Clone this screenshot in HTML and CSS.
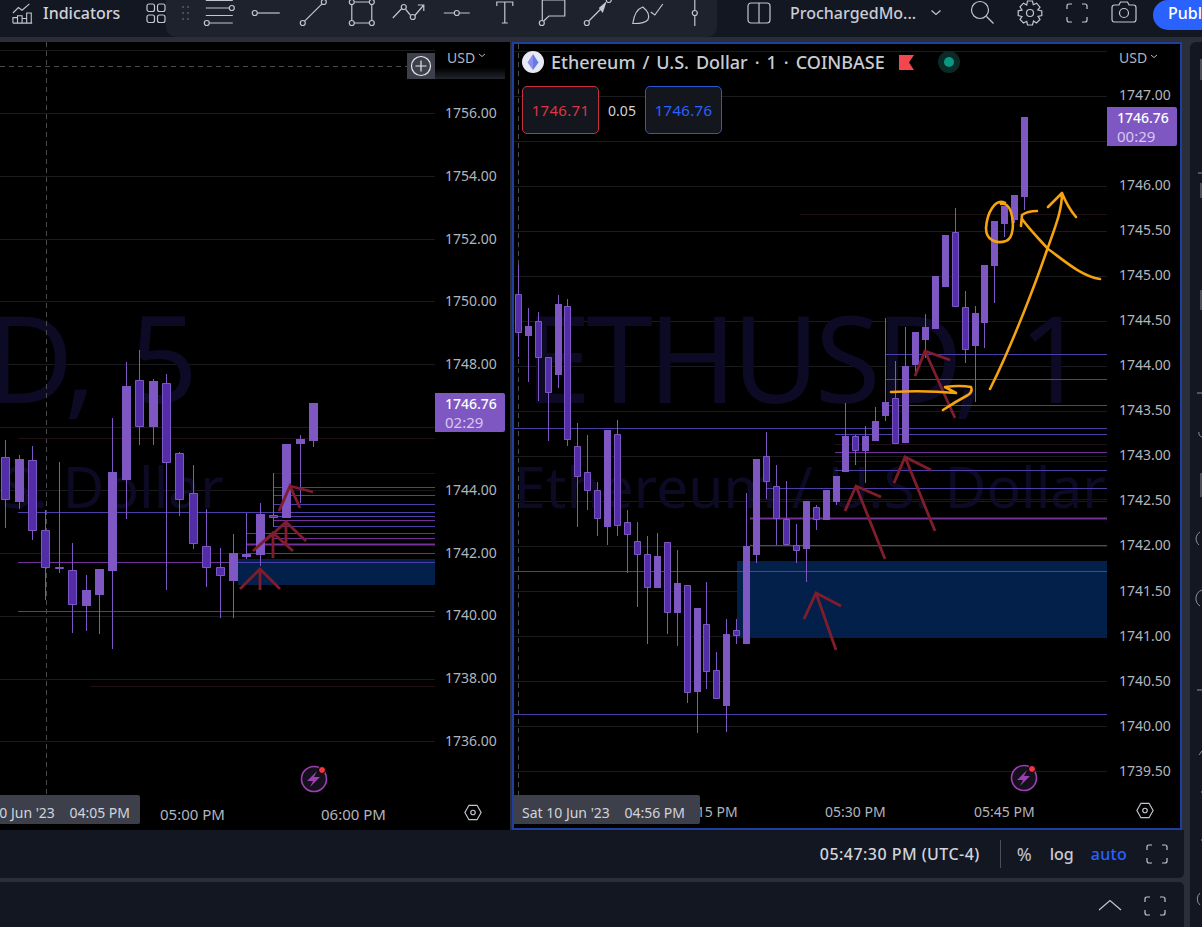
FILE: index.html
```html
<!DOCTYPE html>
<html lang="en">
<head>
<meta charset="utf-8">
<title>ETHUSD chart layout</title>
<link rel="stylesheet" href="styles.css">
</head>
<body>
<div class="app">
  <header class="topbar">
    <div class="top-left">
      <svg class="ico ind" viewBox="0 0 24 24"><path d="M1 12l6-6 4 3 8-7M1 23v-6h5v6M1 23h21M6 23v-8h5v8M11 23v-5h5v5M16 23v-11h5v11"/></svg>
      <span class="ind-label">Indicators</span>
      <svg class="ico layouts" viewBox="0 0 20 22"><rect x="1" y="2" width="7.5" height="7.5" rx="2"/><rect x="11.5" y="2" width="7.5" height="7.5" rx="2"/><rect x="1" y="13" width="7.5" height="7.5" rx="2"/><rect x="11.5" y="13" width="7.5" height="7.5" rx="2"/></svg>
    </div>
    <nav class="toolbar">
      <svg class="grip" viewBox="0 0 20 37"><path d="M7 6h2v2H7zM12 6h2v2h-2zM7 12h2v2H7zM12 12h2v2h-2zM7 18h2v2H7zM12 18h2v2h-2z"/></svg>
      <svg class="tool" viewBox="-23.8 0 47.6 37"><path d="M-13 0.5H14M-13 8H10.500M-13 15.500H14M-9.500 23H14"/><circle cx="13" cy="8" r="2.500"/><circle cx="-12" cy="23" r="2.500"/></svg>
      <svg class="tool" viewBox="-23.8 0 47.6 37"><circle cx="-12" cy="13" r="2.500"/><path d="M-9.500 13H13"/></svg>
      <svg class="tool" viewBox="-23.8 0 47.6 37"><circle cx="-11" cy="23" r="2.500"/><circle cx="10" cy="2" r="2.500"/><path d="M-9.200 21.200L8.200 3.800"/></svg>
      <svg class="tool" viewBox="-23.8 0 47.6 37"><circle cx="-10" cy="2" r="2.500"/><circle cx="10" cy="2" r="2.500"/><circle cx="-10" cy="23" r="2.500"/><circle cx="10" cy="23" r="2.500"/><path d="M-7.500 2H7.500M-7.500 23H7.500M-10 4.500V20.500M10 4.500V20.500"/></svg>
      <svg class="tool" viewBox="-23.8 0 47.6 37"><path d="M-16 18L-7 8.500M-3 9.500L1.500 15M6 15.500L15 5M9 5H15V11"/><circle cx="-5" cy="7" r="2.500"/><circle cx="4" cy="17" r="2.500"/></svg>
      <svg class="tool" viewBox="-23.8 0 47.6 37"><path d="M-13 13H-2.500M2.500 13H13"/><circle cy="13" r="2.500"/></svg>
      <svg class="tool" viewBox="-23.8 0 47.6 37"><path d="M-8 6V2H8V6M0 2V23M-3 23H3"/></svg>
      <svg class="tool" viewBox="-23.8 0 47.6 37"><path d="M-9.500 20.500V0H13V16H-3L-8 21"/><circle cx="-10" cy="23" r="2.500"/></svg>
      <svg class="tool" viewBox="-23.8 0 47.6 37"><circle cx="-13" cy="23" r="2.500"/><path d="M-11 21L2 8"/><path class="solid" d="M7 1L3 13L-1 8z"/><circle cx="9" cy="0" r="2.500"/></svg>
      <svg class="tool" viewBox="-23.800 0 47.600 37"><path d="M-14 23.500C-13 16 -10 9 -4 7C1 11 3 16 1 20C-3 24 -9 23.500 -14 23.500zM4 12L8 15L16 4"/></svg>
      <svg class="tool" viewBox="-23.800 0 47.600 37"><path d="M0 0V10.500M0 15.500V26"/><circle cy="13" r="2.500"/></svg>
    </nav>
    <div class="top-right">
      <svg class="ico t-layout" viewBox="0 0 24 22"><rect x="1" y="1" width="22" height="20" rx="3"/><path d="M12 1V21"/></svg>
      <span class="layout-name">ProchargedMo...</span>
      <svg class="ico t-chev" viewBox="0 0 12 8"><path d="M1.500 1.500L6 5.500L10.500 1.500"/></svg>
      <i class="t-sep"></i>
      <svg class="ico t-search" viewBox="0 0 24 24"><circle cx="10" cy="10" r="8.500"/><path d="M16.500 16.500L23.500 23.500"/></svg>
      <svg class="ico t-gear" viewBox="0 0 26 26"><circle cx="13" cy="13" r="3.500"/><path d="M10.500 1H15.500L16.300 4.700L19.600 3.200L23 7.200L20.800 10L24.800 11V15.500L21 16.300L23 19.500L19.500 23L16.500 21L15.500 25H10.500L9.700 21.300L6.500 23L3 19.500L5 16.500L1.200 15.500V10.800L5 10L3 6.800L6.500 3.200L9.700 5z"/></svg>
      <svg class="ico t-full" viewBox="0 0 22 20"><path d="M1 6V3Q1 1 3 1H6M16 1H19Q21 1 21 3V6M21 14V17Q21 19 19 19H16M6 19H3Q1 19 1 17V14"/></svg>
      <svg class="ico t-cam" viewBox="0 0 26 22"><path d="M3.500 4H8L9.500 1H16.500L18 4H22.500Q25 4 25 6.500V18.500Q25 21 22.500 21H3.500Q1 21 1 18.500V6.500Q1 4 3.500 4z"/><circle cx="13" cy="12" r="4.500"/></svg>
      <span class="publish">Publish</span>
    </div>
  </header>

  <div class="workspace">
    <main class="main">
      <div class="panes">
        <section class="pane pane-left">
          <svg class="plot" viewBox="0 42 435 755">
            <g class="grid"><path d="M0 50.500H435M0 113.500H435M0 176.500H435M0 239.500H435M0 301.500H435M0 364.500H435M0 427.500H435M0 490.500H435M0 553.500H435M0 616.500H435M0 679.500H435M0 741.500H435"/></g>
            <text class="wm wm-a" x="-86" y="403">ETHUSD, 5</text>
            <text class="wm wm-b" x="-72" y="508">Ethereum / U.S. Dollar</text>
            <path class="cross" d="M46.500 42V797M0 66.500H408"/>
            <rect class="zone" x="238" y="559" width="197" height="26"/>
            <path class="ln-red" d="M18 438.500H435M273 473.500H435M90 686.500H435"/>
            <path class="ln-blue" d="M18 512.500H435M18 611.500H435M273 487.500H435M273 504.500H435M273 516.500H435M273 526.500H435M246 533.500H435M273 553.500H435M246 553.500H273"/>
            <path class="ln-mag" d="M18 562.500H238M273 495.500H435M273 520.500H435M273 538.500H435"/>
            <path class="ln-mag thick" d="M246 544.500H435"/>
            <path class="ln-blue" d="M238 562.500H435"/>
            <path class="wick" d="M5.500 440V528M19.500 455V509M32.500 446V540M45.500 510V600M59.500 462V573M72.500 543V633M86.500 575V631M99.500 569V634M112.500 418V649M126.500 362V519M139.500 350V445M153.500 379V445M166.500 374V590M179.500 452V516M193.500 465V549M206.500 509V587M220.500 548V618M233.500 534V618M246.500 513V559M260.500 503V566M273.500 473V527M300.500 435V503M313.500 403V447"/>
            <path class="up" d="M15 459h9v43h-9zM82 590h9v16h-9zM95 569h9v26h-9zM108 472h9v99h-9zM122 386h9v94h-9zM149 381h9v46h-9zM229 553h9v28h-9zM242 554h9v3h-9zM256 514h9v41h-9zM282 444h9v74h-9zM296 439h9v5h-9zM309 403h9v38h-9z"/>
            <path class="down" d="M1.500 457.500h8v42h-8zM28.500 460.500h8v70h-8zM41.500 530.500h8v37h-8zM55.500 567.500h8v1h-8zM68.500 570.500h8v34h-8zM135.500 380.500h8v46h-8zM162.500 383.500h8v79h-8zM175.500 453.500h8v46h-8zM189.500 493.500h8v50h-8zM202.500 546.500h8v21h-8zM216.500 567.500h8v8h-8zM269.500 515.500h8v2h-8z"/>
            <path class="arrow" d="M240 589L260 569L280 589M260 569V590M253 551L273 533L293 551M273 533V558M265 541L286 522L306 541M286 522V545M279 511L290 486L300 508M290 486L313 492"/>
            <g class="bolt" transform="translate(314 779)"><circle r="12.500"/><path d="M3 -8L-7 2H-1L-4 8L6 -2H0z"/><circle class="dot" cx="8" cy="-9" r="3.500"/></g>
          </svg>
          <div class="price-axis axis-left">
            <span>1756.00</span><span>1754.00</span><span>1752.00</span><span>1750.00</span><span>1748.00</span><span class="under">1746.00</span><span>1744.00</span><span>1742.00</span><span>1740.00</span><span>1738.00</span><span>1736.00</span>
            <div class="usd usd-left">USD<svg viewBox="0 0 8 5"><path d="M1 1L4 3.500L7 1"/></svg></div>
            <div class="tag tag-left"><b>1746.76</b><em>02:29</em></div>
          </div>
          <div class="time-axis">
            <span class="date-tag date-left"><span class="date-text">0 Jun '23 &nbsp;&nbsp;&nbsp;04:05 PM</span></span>
            <span class="t t1">05:00 PM</span>
            <span class="t t2">06:00 PM</span>
          </div>
          <div class="corner"><svg class="hex" viewBox="0 0 20 18"><path d="M5.500 1H14.500L19 9L14.500 17H5.500L1 9z"/><circle cx="10" cy="9" r="2.500"/></svg></div>
          <div class="plus-box"><svg viewBox="0 0 22 22"><circle cx="11" cy="11" r="9.500"/><path d="M11 5.500V16.500M5.500 11H16.500"/></svg></div>
        </section>
        <i class="pane-sep"></i>
        <section class="pane pane-right">
          <svg class="plot" viewBox="514 44 593 751">
            <g class="grid"><path d="M514 51.500H1107M514 96.500H1107M514 141.500H1107M514 186.500H1107M514 231.500H1107M514 276.500H1107M514 321.500H1107M514 366.500H1107M514 411.500H1107M514 456.500H1107M514 501.500H1107M514 546.500H1107M514 591.500H1107M514 636.500H1107M514 681.500H1107M514 726.500H1107M514 771.500H1107"/></g>
            <text class="wm wm-a" x="803.500" y="403">ETHUSD, 1</text>
            <text class="wm wm-b" x="810" y="508">Ethereum / U.S. Dollar</text>
            <path class="cross" d="M518.500 44V795"/>
            <rect class="zone" x="737" y="561" width="370" height="77"/>
            <path class="ln-red" d="M800 214.500H1107M835 444.500H1107M835 461.500H1107M750 499.500H1107"/>
            <path class="ln-blue" d="M514 428.500H1107M514 714.500H1107M885 354.500H1107M885 405.500H1107M835 434.500H1107M835 470.500H1107M766 488.500H1107M750 545.500H1107M737 571.500H1107"/>
            <path class="ln-mag" d="M514 571.500H737M885 379.500H1107M835 452.500H1107"/>
            <path class="ln-mag thick" d="M750 518.500H1107"/>
            <path class="wick" d="M518.500 265V357M528.500 308V382M538.500 312V401M548.500 357V441M558.500 295V388M567.500 299V446M577.500 423V527M587.500 435V510M597.500 482V536M607.500 430V545M617.500 420V536M627.500 510V573M637.500 522V607M647.500 536V644M657.500 533V588M667.500 542V634M677.500 550V646M687.500 585V703M697.500 608V733M706.500 582V689M716.500 652V699M726.500 619V732M736.500 619V644M746.500 493V644M756.500 459V563M766.500 432V499M776.500 465V545M786.500 481V545M796.500 524V563M806.500 501V582M816.500 505V530M826.500 490V520M836.500 476V505M845.500 403V472M855.500 435V465M865.500 426V483M875.500 407V441M885.500 318V421M895.500 361V444M905.500 327V443M915.500 332V376M925.500 314V358M955.500 208V307M965.500 291V363M975.500 306V402M984.500 265V348M994.500 221V303M1004.500 206V237M1014.500 195V223M1024.500 117V210"/>
            <path class="up" d="M525 326h7v10h-7zM555 304h7v71h-7zM604 430h7v97h-7zM654 556h7v32h-7zM674 583h7v30h-7zM694 608h7v84h-7zM723 634h7v72h-7zM743 546h7v98h-7zM753 459h7v96h-7zM803 501h7v48h-7zM823 490h7v30h-7zM833 476h7v26h-7zM842 436h7v36h-7zM862 436h7v15h-7zM872 421h7v20h-7zM882 402h7v14h-7zM902 366h7v77h-7zM912 332h7v33h-7zM922 327h7v13h-7zM932 276h7v53h-7zM942 235h7v52h-7zM972 313h7v33h-7zM981 265h7v58h-7zM991 221h7v45h-7zM1001 206h7v18h-7zM1011 195h7v25h-7zM1021 117h7v80h-7z"/>
            <path class="down" d="M515.500 294.500h6v38h-6zM535.500 321.500h6v36h-6zM545.500 357.500h6v35h-6zM564.500 306.500h6v133h-6zM574.500 446.500h6v30h-6zM584.500 472.500h6v18h-6zM594.500 490.500h6v28h-6zM614.500 434.500h6v91h-6zM624.500 522.500h6v12h-6zM634.500 541.500h6v13h-6zM644.500 554.500h6v33h-6zM664.500 542.500h6v70h-6zM684.500 585.500h6v107h-6zM703.500 624.500h6v47h-6zM713.500 670.500h6v28h-6zM733.500 630.500h6v5h-6zM763.500 456.500h6v25h-6zM773.500 486.500h6v32h-6zM783.500 519.500h6v25h-6zM793.500 545.500h6v5h-6zM813.500 507.500h6v12h-6zM852.500 436.500h6v14h-6zM892.500 398.500h6v45h-6zM952.500 232.500h6v74h-6zM962.500 307.500h6v42h-6z"/>
            <path class="arrow" d="M804 619L816 593L841 606M816 593L836 650M845 511L856 486L881 497M856 486L885 559M894 483L905 457L931 470M905 457L935 531M915 376L925 351L950 360M925 351L955 418"/>
            <path class="pen" d="M891 392Q925 390 956 393L945 387Q960 385 971 387Q973 392 968 395Q955 402 943 410M990 389C1012 345 1035 285 1047 250C1056 225 1062 210 1062 193M1048 207L1062 193C1066 203 1070 210 1076 217M1100 279C1080 276 1060 257 1048 249C1040 240 1030 230 1022 219M1021 226L1022 215C1026 212 1032 211 1037 211M1005 203C995 198 987 213 986 228C986 241 997 244 1006 241C1014 238 1014 222 1011 212C1009 206 1005 203 1001 204"/>
            <g class="bolt" transform="translate(1024 778)"><circle r="12.500"/><path d="M3 -8L-7 2H-1L-4 8L6 -2H0z"/><circle class="dot" cx="8" cy="-9" r="3.500"/></g>
          </svg>
          <div class="price-axis axis-right">
            <span>1747.00</span><span class="under">1746.50</span><span>1746.00</span><span>1745.50</span><span>1745.00</span><span>1744.50</span><span>1744.00</span><span>1743.50</span><span>1743.00</span><span>1742.50</span><span>1742.00</span><span>1741.50</span><span>1741.00</span><span>1740.50</span><span>1740.00</span><span>1739.50</span>
            <div class="usd usd-right">USD<svg viewBox="0 0 8 5"><path d="M1 1L4 3.500L7 1"/></svg></div>
            <div class="tag tag-right"><b>1746.76</b><em>00:29</em></div>
          </div>
          <div class="time-axis">
            <span class="date-tag date-right"><span class="date-text">Sat 10 Jun '23 &nbsp;&nbsp;&nbsp;04:56 PM</span></span>
            <span class="t t3">05:15 PM</span>
            <span class="t t4">05:30 PM</span>
            <span class="t t5">05:45 PM</span>
          </div>
          <div class="corner"><svg class="hex" viewBox="0 0 20 18"><path d="M5.500 1H14.500L19 9L14.500 17H5.500L1 9z"/><circle cx="10" cy="9" r="2.500"/></svg></div>
          <div class="legend">
            <div class="legend-title">
              <svg class="coin" viewBox="0 0 22 22"><circle cx="11" cy="11" r="11"/><path class="c1" d="M11 3L5.500 11.500L11 19z"/><path class="c2" d="M11 3L16.500 11.500L11 19z"/></svg>
              <span class="sym">Ethereum / U.S. Dollar · 1 · COINBASE</span>
              <svg class="flag" viewBox="0 0 15 15"><path d="M0 0H15L10 7.500L15 15H0z"/></svg>
              <svg class="status" viewBox="0 0 22 22"><circle class="halo" cx="11" cy="11" r="11"/><circle class="core" cx="11" cy="11" r="5"/></svg>
            </div>
            <div class="quotes">
              <span class="quote sell">1746.71</span>
              <span class="spread">0.05</span>
              <span class="quote buy">1746.76</span>
            </div>
          </div>
        </section>
      </div>
      <footer class="status-bar">
        <span class="clock">05:47:30 PM (UTC-4)</span>
        <i class="st-sep"></i>
        <span class="st-btn pct">%</span>
        <span class="st-btn log">log</span>
        <span class="st-btn auto">auto</span>
        <svg class="ico st-full" viewBox="0 0 22 20"><path d="M1 6V3Q1 1 3 1H6M16 1H19Q21 1 21 3V6M21 14V17Q21 19 19 19H16M6 19H3Q1 19 1 17V14"/></svg>
      </footer>
      <div class="bottom-panel">
        <svg class="ico bp-up" viewBox="0 0 24 12"><path d="M1 11L12 1.500L23 11"/></svg>
        <svg class="ico bp-full" viewBox="0 0 22 20"><path d="M1 6V3Q1 1 3 1H6M16 1H19Q21 1 21 3V6M21 14V17Q21 19 19 19H16M6 19H3Q1 19 1 17V14"/></svg>
      </div>
    </main>
    <aside class="sidebar">
      <svg viewBox="1190 42 12 885"><path class="side-fill" d="M1200 59h2v21h-2zM1200 183h2v15h-2zM1200 290h2v20h-2zM1200 473h2v24h-2z"/><path class="side-line" d="M1198 173H1202M1197 393H1202M1197 690H1202M1199 432A4 4 0 0 0 1202 437M1200 532A8 8 0 0 0 1199 545M1202 590A9 9 0 0 0 1200 606M1199 755L1202 751M1201 792H1202M1201 840H1202M1200 893A8 8 0 0 0 1200 905"/></svg>
    </aside>
  </div>
</div>
</body>
</html>
```
FILE: styles.css
```css
* { box-sizing: border-box; }
html, body { margin: 0; padding: 0; background: #2a2e39; }
body { font-family: "Noto Sans", "Liberation Sans", sans-serif; color: #d1d4dc; }
.app { width: 1202px; height: 927px; overflow: hidden; display: flex; flex-direction: column; gap: 5px; background: #2a2e39; }

.ico { fill: none; stroke: #c3c6ce; stroke-width: 1.2; display: block; flex: none; }

/* top bar */
.topbar { height: 37px; flex: none; background: #131722; display: flex; align-items: flex-start; }
.top-left { width: 166px; flex: none; height: 26px; display: flex; align-items: center; padding-left: 12px; }
.ind { width: 22px; height: 22px; }
.ind-label { margin-left: 9px; font-size: 16px; font-weight: 500; color: #cfd2da; line-height: 26px; width: 81px; white-space: nowrap; }
.layouts { width: 20px; height: 22px; margin-left: 22px; }
.toolbar { width: 551px; flex: none; height: 37px; background: #1e222d; border-radius: 0 0 10px 10px; display: flex; padding-left: 9px; overflow: hidden; }
.grip { width: 20px; height: 37px; flex: none; fill: #4a4e5a; }
.tool { width: 47.6px; height: 37px; flex: none; fill: none; stroke: #c3c6ce; stroke-width: 1.2; }
.tool .solid { fill: #c3c6ce; stroke: none; }
.top-right { flex: 1; height: 37px; display: flex; align-items: flex-start; position: relative; overflow: hidden; }
.t-layout { width: 24px; height: 22px; margin: 2px 0 0 30px; }
.layout-name { margin: 0 0 0 19px; width: 124px; font-size: 16px; font-weight: 500; line-height: 26px; color: #c9ccd4; white-space: nowrap; }
.t-chev { width: 12px; height: 8px; margin: 9px 0 0 16px; }
.t-sep { width: 1px; height: 26px; background: #2f333e; margin: 0 0 0 11px; }
.t-search { width: 24px; height: 24px; margin: 0 0 0 17px; }
.t-gear { width: 26px; height: 26px; margin: 0 0 0 23px; }
.t-full { width: 22px; height: 20px; margin: 3px 0 0 23px; }
.t-cam { width: 26px; height: 22px; margin: 1px 0 0 23px; }
.publish { margin-left: 16px; width: 80px; flex: none; height: 30px; background: #2962ff; border-radius: 15px 0 0 15px; color: #fff; font-size: 16px; font-weight: 500; line-height: 27px; padding-left: 15px; white-space: nowrap; }

/* workspace */
.workspace { flex: 1; display: flex; min-height: 0; }
.main { width: 1184px; flex: none; display: flex; flex-direction: column; }
.sidebar { flex: 1; margin-left: 6px; background: #131722; border-radius: 6px 0 0 0; overflow: hidden; }
.sidebar svg { display: block; width: 12px; height: 885px; }
.side-fill { fill: #4a4e5a; }
.side-line { fill: none; stroke: #8f929a; stroke-width: 1; }

.panes { height: 788px; flex: none; display: flex; }
.pane { position: relative; background: #000; display: grid; overflow: hidden; }
.pane-left { width: 510px; flex: none; grid-template-columns: 435px 75px; grid-template-rows: 755px 33px; }
.pane-sep { width: 2px; flex: none; background: #2a2e39; }
.pane-right { width: 670px; flex: none; border: 2px solid #1e3f9f; grid-template-columns: 593px 73px; grid-template-rows: 751px 33px; }

.plot { display: block; width: 100%; height: 100%; }
.grid path { stroke: #1a1b1f; stroke-width: 1; fill: none; }
.wm { fill: #0d0a26; text-anchor: middle; font-family: "Noto Sans", sans-serif; }
.wm-a { font-size: 120px; letter-spacing: -5px; word-spacing: 12px; }
.wm-b { font-size: 57px; }
.cross { stroke: #4a4a4d; stroke-width: 1; stroke-dasharray: 5 4; fill: none; }
.zone { fill: #03204a; }
.ln-red { stroke: #211016; stroke-width: 1; fill: none; }
.ln-blue { stroke: #4d3fa8; stroke-width: 1; fill: none; }
.ln-mag { stroke: #74309a; stroke-width: 1; fill: none; }
.ln-mag.thick { stroke-width: 2; }
.wick { stroke: #7e57c2; stroke-width: 1; fill: none; }
.up { fill: #7e57c2; }
.down { fill: #512da8; stroke: #7e57c2; stroke-width: 1; }
.arrow { stroke: #7f1d2d; stroke-width: 2.8; fill: none; }
.pen { stroke: #f5a30f; stroke-width: 2.6; fill: none; stroke-linecap: round; stroke-linejoin: round; }
.bolt circle { fill: #14101c; stroke: #9c3fb0; stroke-width: 1.6; }
.bolt path { fill: #9c3fb0; }
.bolt .dot { fill: #f23645; stroke: #000; stroke-width: 1; }

/* price axis */
.price-axis { position: relative; display: flex; flex-direction: column; font-size: 14px; color: #b2b5be; }
.price-axis span { display: block; flex: none; line-height: 20px; }
.price-axis span.under { color: transparent; }
.axis-left { padding: 39.6px 0 0 10px; }
.axis-left span { height: 62.8px; padding-top: 21.4px; }
.axis-right { padding: 28.5px 0 0 12px; }
.axis-right span { height: 45.06px; padding-top: 12.5px; }
.usd { position: absolute; font-size: 14px; color: #b2b5be; line-height: 20px; display: flex; align-items: center; gap: 3px; }
.usd svg { width: 8px; height: 5px; fill: none; stroke: #b2b5be; stroke-width: 1; margin-bottom: 3px; }
.usd-left { left: 0; top: 0; width: 70px; height: 37px; padding: 6px 0 0 12px; align-items: flex-start; background: linear-gradient(#000 70%, #23252c); }
.usd-left svg { margin-top: 5px; }
.usd-right { left: 12px; top: 4px; }
.tag { position: absolute; width: 70px; height: 39px; background: #7e57c2; border-radius: 0 2px 2px 0; display: flex; flex-direction: column; padding: 2px 0 0 10px; font-size: 14px; line-height: 18px; }
.tag b { color: #fff; font-weight: 500; }
.tag em { font-style: normal; color: #d5c9ee; font-size: 15px; }
.tag-left { left: 0; top: 351px; }
.tag-right { left: 0; top: 63px; }

/* time axis */
.time-axis { position: relative; font-size: 14px; color: #b2b5be; line-height: 20px; }
.t { position: absolute; top: 7px; white-space: nowrap; }
.t1 { left: 160px; font-size: 15px; }
.t2 { left: 321px; font-size: 15px; }
.t3 { left: 163px; }
.t4 { left: 311px; }
.t5 { left: 460px; }
.date-tag { position: absolute; height: 29px; background: #3d404a; border-radius: 0 2px 2px 0; color: #d1d4dc; white-space: nowrap; line-height: 35px; z-index: 1; display: flex; overflow: hidden; }
.date-text { flex: none; }
.date-left { left: 0; top: -2px; width: 140px; justify-content: flex-end; padding-right: 10px; }
.date-right { left: 0; top: 0; width: 186px; padding-left: 8px; }
.corner { display: flex; align-items: flex-start; justify-content: flex-start; }
.pane-left .corner { padding: 7px 0 0 29px; }
.pane-right .corner { padding: 7px 0 0 29px; }
.hex { width: 18px; height: 17px; fill: none; stroke: #c3c6ce; stroke-width: 1.3; }

.plus-box { position: absolute; left: 407px; top: 11px; width: 28px; height: 26px; background: #3d404a; display: flex; align-items: center; justify-content: center; }
.plus-box svg { width: 22px; height: 22px; fill: none; stroke: #e6e7ea; stroke-width: 1.2; }

/* legend */
.legend { position: absolute; left: 8px; top: 7px; display: flex; flex-direction: column; gap: 13px; }
.legend-title { display: flex; align-items: center; height: 22px; }
.coin { width: 22px; height: 22px; flex: none; }
.coin circle { fill: #e8e9f4; }
.c1 { fill: #8f8be8; }
.c2 { fill: #5c7de8; }
.sym { margin-left: 7px; font-size: 18px; font-weight: 500; color: #c9ccd4; line-height: 22px; white-space: nowrap; width: 333px; word-spacing: 2.3px; }
.flag { width: 15px; height: 15px; margin-left: 15px; flex: none; fill: #f4474d; }
.status { width: 22px; height: 22px; margin-left: 24px; flex: none; }
.halo { fill: #0b2a26; }
.core { fill: #089981; }
.quotes { display: flex; align-items: center; }
.quote { width: 77px; height: 48px; border-radius: 5px; border: 1px solid; background: #14161e; font-size: 15px; letter-spacing: 0.3px; line-height: 46px; text-align: center; }
.sell { border-color: #c9303f; color: #dc3545; }
.buy { border-color: #2a58d0; color: #2962ff; }
.spread { width: 46px; text-align: center; font-size: 14px; color: #d1d4dc; }

/* status */
.status-bar { height: 48px; flex: none; background: #131722; border-radius: 0 0 5px 0; display: flex; align-items: center; justify-content: flex-end; padding: 0 16px 0 0; }
.clock { font-size: 16px; font-weight: 500; letter-spacing: 0.45px; color: #d1d4dc; white-space: nowrap; }
.st-sep { width: 1px; height: 28px; background: #4a4e5a; margin: 0 16px 0 20px; }
.st-btn { font-size: 16px; font-weight: 500; line-height: 20px; }
.pct { font-weight: 400; font-size: 18px; color: #c3c6ce; }
.log { margin-left: 18px; color: #c9ccd4; }
.auto { margin-left: 17px; color: #2962ff; letter-spacing: 0.3px; }
.st-full { width: 22px; height: 20px; margin-left: 19px; }

.bottom-panel { margin-top: 4px; flex: 1; background: #131722; border-radius: 0 5px 0 0; display: flex; align-items: flex-start; justify-content: flex-end; padding: 14px 18px 0 0; }
.bp-up { width: 24px; height: 12px; margin: 3px 22px 0 0; }
.bp-full { width: 22px; height: 20px; }
```
